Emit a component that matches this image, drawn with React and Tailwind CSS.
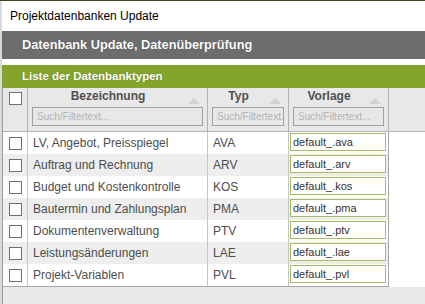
import React from "react";

const rows = [
  ["LV, Angebot, Preisspiegel", "AVA", "default_.ava"],
  ["Auftrag und Rechnung", "ARV", "default_.arv"],
  ["Budget und Kostenkontrolle", "KOS", "default_.kos"],
  ["Bautermin und Zahlungsplan", "PMA", "default_.pma"],
  ["Dokumentenverwaltung", "PTV", "default_.ptv"],
  ["Leistungsänderungen", "LAE", "default_.lae"],
  ["Projekt-Variablen", "PVL", "default_.pvl"],
];

function Checkbox() {
  return <div className="w-[13px] h-[13px] border border-[#6f6f6f] bg-white shrink-0" />;
}

function SortTriangle() {
  return (
    <svg width="12" height="6" viewBox="0 0 12 6" className="shrink-0 mt-[9px] mr-[7px]">
      <polygon points="6,0 12,6 0,6" fill="#d2d2d2" />
    </svg>
  );
}

function HeaderCell({ label, width }) {
  return (
    <div className={`${width} shrink-0 border-r border-[#b4b4b4] flex flex-col pt-[1px]`}>
      <div className="flex h-[14px]">
        <div className="flex-1 text-center text-[12px] leading-[14px] font-bold text-[#505050]">{label}</div>
        <SortTriangle />
      </div>
      <div className="px-[4px] mt-[4px]">
        <div className="h-[19px] border border-[#a2a2a2] overflow-hidden whitespace-nowrap text-[10px] leading-[17px] text-[#b4b4b4] pl-[4px]">
          Such/Filtertext...
        </div>
      </div>
    </div>
  );
}

export default function App() {
  return (
    <div className="w-[425px] h-[304px] overflow-hidden bg-white flex flex-col font-['Liberation_Sans',Arial,sans-serif]">
      <div className="h-px shrink-0 bg-[#3c4a22]" />
      <div className="flex flex-1 min-h-0">
        <div className="w-[2px] shrink-0 bg-[#dadada]" />
        <div className="flex-1 min-w-0 flex flex-col">
          <div className="h-[30px] shrink-0 flex items-center pl-[8px] text-[12px] text-black">
            Projektdatenbanken Update
          </div>
          <div className="h-[28px] shrink-0 bg-[#6d6d6d] flex items-center pl-[20px] text-white font-bold text-[12.75px] [text-shadow:0_0_1px_rgba(0,0,0,0.45)]">
            Datenbank Update, Datenüberprüfung
          </div>
          <div className="h-[6px] shrink-0" />
          <div className="h-[23px] shrink-0 bg-[#83a52b] flex items-center pl-[20px] text-white font-bold text-[11.5px] [text-shadow:0_0_1px_rgba(0,0,0,0.35)]">
            Liste der Datenbanktypen
          </div>
          <div className="flex-1 min-h-0 flex flex-col border-l border-[#9a9a9a]">
            <div className="h-[44px] shrink-0 bg-[#e8e8e8] border-b border-[#b4b4b4] flex">
              <div className="w-[25px] shrink-0 border-r border-[#b4b4b4] pl-[6px] pt-[4px]">
                <Checkbox />
              </div>
              <HeaderCell label="Bezeichnung" width="w-[180px]" />
              <HeaderCell label="Typ" width="w-[81px]" />
              <HeaderCell label="Vorlage" width="w-[100px]" />
              <div className="flex-1" />
            </div>
            <div className="flex shrink-0">
              <div className="w-[386px] shrink-0 border-b border-[#a8a8a8]">
                {rows.map(([name, typ, vorlage], i) => (
                  <div
                    key={typ}
                    className={`h-[22px] flex ${i % 2 === 1 ? "bg-[#eeeeee]" : "bg-white"}`}
                  >
                    <div className="w-[25px] shrink-0 border-r border-[#c6c6c6] pl-[6px] flex items-center">
                      <Checkbox />
                    </div>
                    <div className="w-[180px] shrink-0 border-r border-[#c6c6c6] pl-[5px] text-[12px] leading-[22px] text-[#4d4d4d] whitespace-nowrap overflow-hidden">
                      {name}
                    </div>
                    <div className="w-[81px] shrink-0 border-r border-[#c6c6c6] pl-[5px] text-[12px] leading-[22px] text-[#4d4d4d]">
                      {typ}
                    </div>
                    <div className="w-[100px] shrink-0 border-r border-[#a8a8a8] pl-[1px] pt-[1px]">
                      <div className="w-[96px] h-[18px] border border-[#a0bf5c] bg-white pl-[2px] text-[11px] leading-[16px] text-[#333333] whitespace-nowrap overflow-hidden">
                        {vorlage}
                      </div>
                    </div>
                  </div>
                ))}
              </div>
              <div className="flex-1 bg-white" />
            </div>
            <div className="flex-1 bg-[#e9e9e9]" />
          </div>
        </div>
      </div>
    </div>
  );
}
